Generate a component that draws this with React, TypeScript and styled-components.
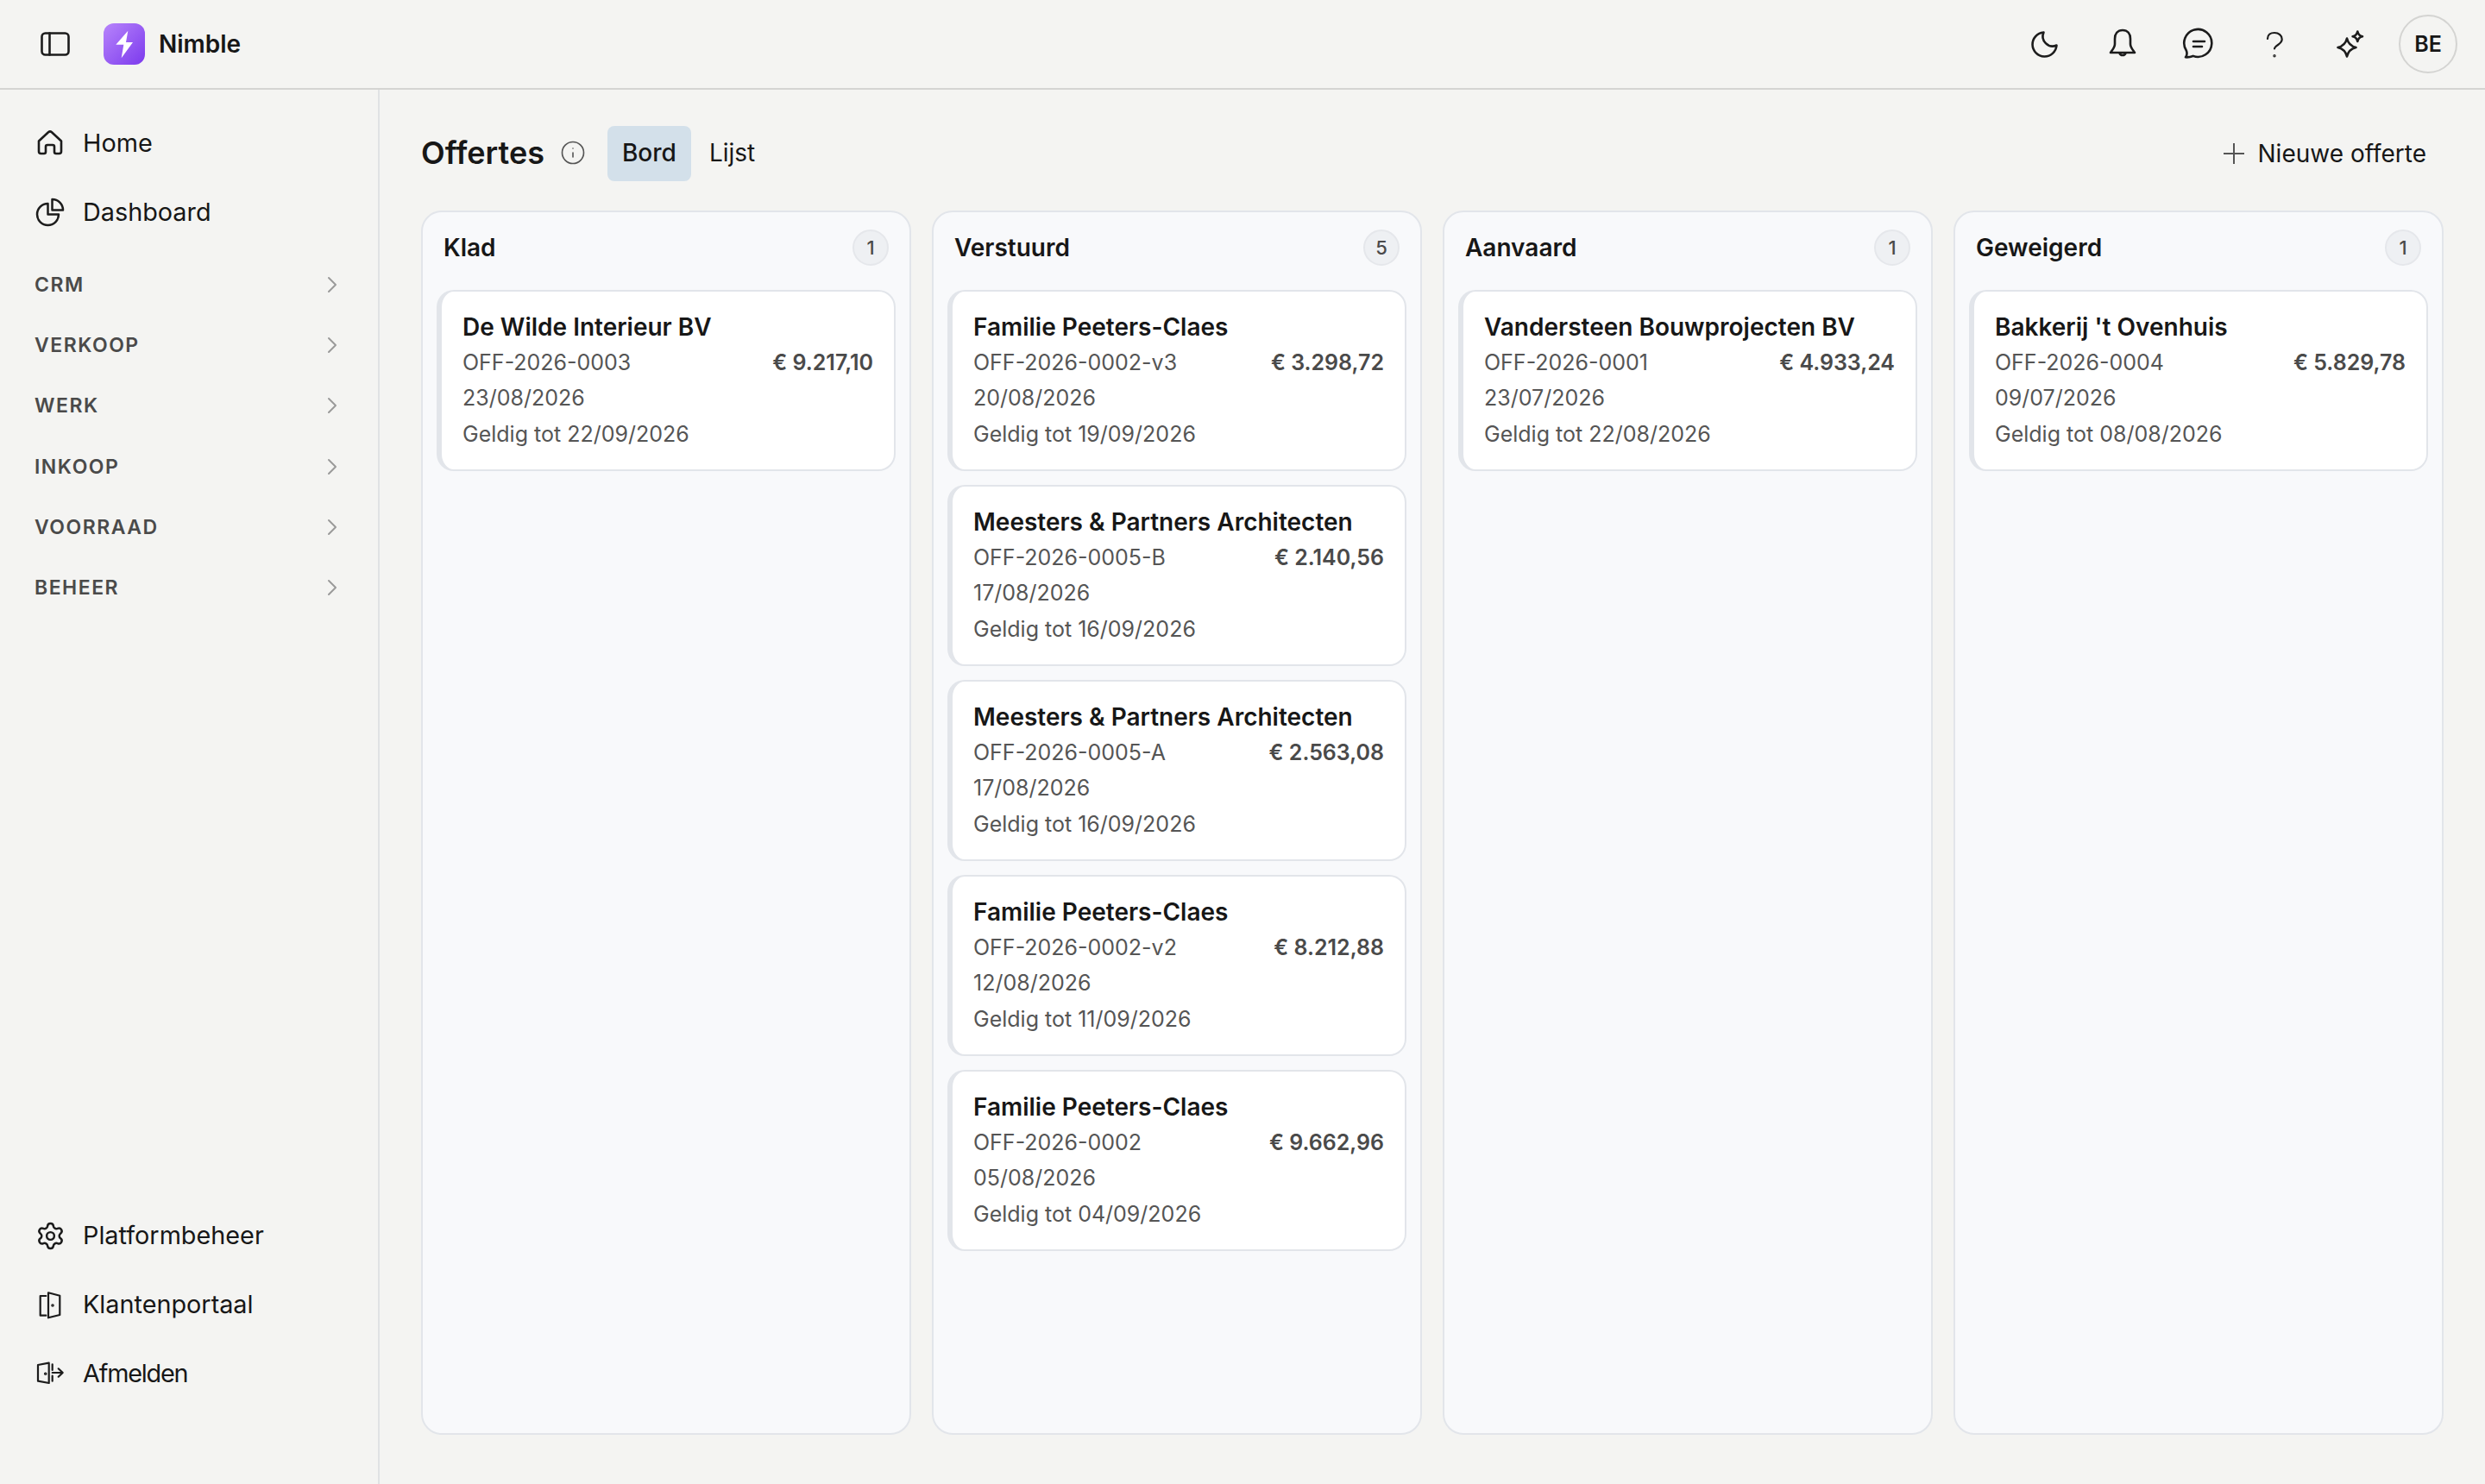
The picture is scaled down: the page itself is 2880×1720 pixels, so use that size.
import React from "react";
import styled, { createGlobalStyle } from "styled-components";
import { ChevronRight, Info, Settings } from "lucide-react";

type Offer = {
  name: string;
  code: string;
  amount: string;
  date: string;
  validUntil: string;
};

type Lane = {
  title: string;
  offers: Array<Offer>;
};

const lanes: Array<Lane> = [
  {
    title: "Klad",
    offers: [
      {
        name: "De Wilde Interieur BV",
        code: "OFF-2026-0003",
        amount: "€ 9.217,10",
        date: "23/08/2026",
        validUntil: "22/09/2026",
      },
    ],
  },
  {
    title: "Verstuurd",
    offers: [
      {
        name: "Familie Peeters-Claes",
        code: "OFF-2026-0002-v3",
        amount: "€ 3.298,72",
        date: "20/08/2026",
        validUntil: "19/09/2026",
      },
      {
        name: "Meesters & Partners Architecten",
        code: "OFF-2026-0005-B",
        amount: "€ 2.140,56",
        date: "17/08/2026",
        validUntil: "16/09/2026",
      },
      {
        name: "Meesters & Partners Architecten",
        code: "OFF-2026-0005-A",
        amount: "€ 2.563,08",
        date: "17/08/2026",
        validUntil: "16/09/2026",
      },
      {
        name: "Familie Peeters-Claes",
        code: "OFF-2026-0002-v2",
        amount: "€ 8.212,88",
        date: "12/08/2026",
        validUntil: "11/09/2026",
      },
      {
        name: "Familie Peeters-Claes",
        code: "OFF-2026-0002",
        amount: "€ 9.662,96",
        date: "05/08/2026",
        validUntil: "04/09/2026",
      },
    ],
  },
  {
    title: "Aanvaard",
    offers: [
      {
        name: "Vandersteen Bouwprojecten BV",
        code: "OFF-2026-0001",
        amount: "€ 4.933,24",
        date: "23/07/2026",
        validUntil: "22/08/2026",
      },
    ],
  },
  {
    title: "Geweigerd",
    offers: [
      {
        name: "Bakkerij 't Ovenhuis",
        code: "OFF-2026-0004",
        amount: "€ 5.829,78",
        date: "09/07/2026",
        validUntil: "08/08/2026",
      },
    ],
  },
];

const groups = ["CRM", "VERKOOP", "WERK", "INKOOP", "VOORRAAD", "BEHEER"];

const GlobalStyle = createGlobalStyle`
  html, body {
    margin: 0;
    background: #f4f4f2;
  }

  body {
    font-family: Inter, "Liberation Sans", sans-serif;
    color: #171717;
  }
`;

const StyledRoot = styled.div`
  display: flex;
  flex-direction: column;
  height: 1720px;
  overflow: hidden;
`;

const StyledTopbar = styled.header`
  display: flex;
  align-items: center;
  justify-content: space-between;
  box-sizing: border-box;
  height: 104px;
  padding: 0 32px 0 44px;
  border-bottom: 2px solid #d4d4d2;
`;

const StyledBrand = styled.div`
  display: flex;
  align-items: center;
`;

const StyledToggle = styled.span`
  display: flex;
  margin-right: 36px;
`;

const StyledLogo = styled.span`
  display: flex;
  width: 48px;
  height: 48px;
  border-radius: 12px;
  background: linear-gradient(135deg, #b784fb 0%, #7c3aed 100%);
`;

const StyledBrandName = styled.span`
  margin-left: 16px;
  font-size: 28px;
  font-weight: 600;
`;

const StyledActions = styled.div`
  display: flex;
  align-items: center;
  gap: 16px;
`;

const StyledAction = styled.span`
  display: flex;
  justify-content: center;
  width: 72px;
`;

const StyledAvatar = styled.span`
  display: flex;
  align-items: center;
  justify-content: center;
  box-sizing: border-box;
  width: 68px;
  height: 68px;
  margin-left: 4px;
  border: 2px solid #d4d4d2;
  border-radius: 50%;
  font-size: 25px;
  font-weight: 600;
`;

const StyledBody = styled.div`
  display: flex;
  flex: 1;
  min-height: 0;
`;

const StyledSidebar = styled.aside`
  display: flex;
  flex-direction: column;
  box-sizing: border-box;
  width: 440px;
  padding: 22px 0 88px;
  border-right: 2px solid #e0e2e4;
`;

const StyledNavItem = styled.div<{ $tight?: boolean }>`
  display: flex;
  align-items: center;
  gap: 18px;
  height: 80px;
  padding-left: 38px;
  font-size: 28.8px;
  line-height: 40px;
  letter-spacing: ${(p) => (p.$tight ? "-1.2px" : "normal")};
`;

const StyledNavIcon = styled.span`
  display: flex;
  align-items: center;
  justify-content: center;
  width: 40px;
  height: 40px;
`;

const StyledGroups = styled.div`
  margin-top: 9px;
`;

const StyledGroup = styled.div`
  display: flex;
  align-items: center;
  justify-content: space-between;
  height: 70.2px;
  padding: 0 37px 0 40px;
  font-size: 23px;
  font-weight: 600;
  letter-spacing: 1.5px;
  color: #4a4a4a;

  svg {
    color: #9a9a9a;
  }
`;

const StyledBottomNav = styled.div`
  margin-top: auto;
`;

const StyledMain = styled.main`
  display: flex;
  flex: 1;
  flex-direction: column;
  min-width: 0;
  padding: 42px 48px 57px;
`;

const StyledTitleRow = styled.div`
  display: flex;
  align-items: center;
  gap: 4px;
  height: 64px;
  margin-bottom: 34px;
`;

const StyledTitle = styled.h1`
  margin: 0 0 2px;
  font-size: 36px;
  font-weight: 600;
`;

const StyledInfo = styled.span`
  display: flex;
  margin: 0 21px 2px 14px;
  color: #555;
`;

const StyledTab = styled.span<{ $active?: boolean }>`
  display: flex;
  align-items: center;
  box-sizing: border-box;
  height: 64px;
  padding: 0 17px 2px;
  border-radius: 8px;
  font-size: 28px;
  font-weight: ${(p) => (p.$active ? 500 : 400)};
  background: ${(p) => (p.$active ? "#d3e0ea" : "transparent")};
`;

const StyledNewButton = styled.span`
  display: flex;
  align-items: center;
  gap: 15px;
  margin-left: auto;
  padding-right: 20px;
  font-size: 28px;
`;

const StyledBoard = styled.div`
  display: grid;
  flex: 1;
  grid-template-columns: repeat(4, 1fr);
  gap: 24px;
  min-height: 0;
`;

const StyledLane = styled.section`
  box-sizing: border-box;
  padding: 20px 16px;
  border: 2px solid #e2e5ea;
  border-radius: 24px;
  background: #f8f9fb;
`;

const StyledLaneHeader = styled.div`
  display: flex;
  align-items: center;
  justify-content: space-between;
  height: 42px;
  margin-bottom: 28px;
  padding: 0 8px;
`;

const StyledLaneTitle = styled.span`
  font-size: 28px;
  font-weight: 600;
`;

const StyledCount = styled.span`
  display: flex;
  align-items: center;
  justify-content: center;
  box-sizing: border-box;
  width: 42px;
  height: 42px;
  border: 2px solid #e5e7eb;
  border-radius: 50%;
  background: #eef0f3;
  font-size: 22px;
  font-weight: 500;
  color: #4a4a4a;
`;

const StyledCards = styled.div`
  display: flex;
  flex-direction: column;
  gap: 16px;
`;

const StyledCard = styled.article`
  box-sizing: border-box;
  height: 210px;
  padding: 21px 24px 19px;
  border: 2px solid #e2e5ea;
  border-left-width: 6px;
  border-radius: 20px;
  background: #fff;
`;

const StyledCardName = styled.div`
  font-size: 28px;
  font-weight: 600;
  line-height: 41px;
`;

const StyledMetaRow = styled.div`
  display: flex;
  justify-content: space-between;
  font-size: 25px;
  line-height: 41.4px;
  color: #555;
`;

const StyledAmount = styled.span`
  font-weight: 600;
  color: #4a4a4a;
`;

const StyledLine = styled.svg.attrs<{ viewBox?: string; strokeWidth?: number }>(
  (p) => ({
    width: 40,
    height: 40,
    viewBox: p.viewBox || "0 0 40 40",
    fill: "none",
    stroke: "#1c1c1c",
    strokeWidth: p.strokeWidth || 2.6,
    strokeLinecap: "round",
    strokeLinejoin: "round",
  })
)`
  display: block;
  flex: none;
`;

const PanelIcon = () => (
  <StyledLine>
    <rect x="4.5" y="7.5" width="31" height="25" rx="4" />
    <path d="M13.5 7.5v25" />
  </StyledLine>
);

const BoltIcon = () => (
  <svg width="48" height="48" viewBox="0 0 48 48" fill="#fff">
    <path d="M28.3 8.7 14.3 24.7h9l-2.6 15.6L34 22h-8z" />
  </svg>
);

const MoonIcon = () => (
  <StyledLine>
    <path d="M16.5 6.500A14 14 0 1 0 31.500 21.500 11.400 11.400 0 0 1 16.500 6.500Z" />
  </StyledLine>
);

const BellIcon = () => (
  <StyledLine>
    <path d="M20 4C14 4 11 8.500 11 14v6c0 4-3 7-5 10h28c-2-3-5-6-5-10v-6c0-5.500-3-10-9-10Z" />
    <path d="M16.500 30.500a3.700 3.700 0 0 0 7 0" />
  </StyledLine>
);

const ChatIcon = () => (
  <StyledLine>
    <path d="M13.700 33.900A16 16 0 1 0 5.800 27.500C6.800 30 7.500 32 5 35.300C8 35.500 11 35 13.700 33.900Z" />
    <path d="M14 17h13M14 23h10" />
  </StyledLine>
);

const QuestionIcon = () => (
  <StyledLine strokeWidth={2.2}>
    <path d="M12 14c0-5 3.500-7 8-7 5 0 8.700 3 8.700 7.500 0 4.500-4.700 6-7.200 8.500-1 1-1.500 2-1.500 2.500" />
    <circle cx="20" cy="33.700" r="0.6" />
  </StyledLine>
);

const SparkleIcon = () => (
  <StyledLine>
    <path d="M16 13.500Q18 22 26.500 24 18 26 16 34.500 14 26 5.500 24 14 22 16 13.500Z" />
    <path d="M28.300 5.500Q29.300 10.300 34 11.300 29.300 12.300 28.300 17 27.300 12.300 22.600 11.300 27.300 10.300 28.300 5.500Z" />
  </StyledLine>
);

const HomeIcon = () => (
  <StyledLine>
    <path d="M7 17.500 18 7.200Q20 5.500 22 7.200L33 17.500V29.500Q33 32 30.500 32H27Q25 32 25 30V24Q25 22 23 22H17Q15 22 15 24V30Q15 32 13 32H9.500Q7 32 7 29.500Z" />
  </StyledLine>
);

const PieIcon = () => (
  <StyledLine viewBox="0 0 24 24" strokeWidth={1.5}>
    <path d="M10.500 6a7.500 7.500 0 1 0 7.500 7.500h-7.500V6Z" />
    <path d="M13.500 10.500H21A7.500 7.500 0 0 0 13.500 3v7.500Z" />
  </StyledLine>
);

const PortalIcon = () => (
  <StyledLine strokeWidth={2.2}>
    <path d="M15.300 10H8.700v22.700h6.600" />
    <path d="M18 6.300 31.300 9.700V32L18 35.300Z" />
    <circle cx="23" cy="21" r="0.7" />
  </StyledLine>
);

const LogoutIcon = () => (
  <StyledLine strokeWidth={2.2}>
    <path d="M18.700 7.700 6 10v18.700l12.700 2.300Z" />
    <circle cx="14.700" cy="20.300" r="0.7" />
    <path d="M22.700 9.300V16M22.700 22.700v6" />
    <path d="M22.700 19H34.700M29.700 14.300 34.700 19 29.700 23.700" />
  </StyledLine>
);

const PlusIcon = () => (
  <svg width="26" height="26" viewBox="0 0 26 26" stroke="#555" strokeWidth="2">
    <path d="M13 1v24M1 13h24" />
  </svg>
);

const topActions = [MoonIcon, BellIcon, ChatIcon, QuestionIcon, SparkleIcon];

const NavRow: React.FC<{
  icon: React.ReactNode;
  label: string;
  tight?: boolean;
}> = ({ icon, label, tight }) => (
  <StyledNavItem $tight={tight}>
    <StyledNavIcon>{icon}</StyledNavIcon>
    {label}
  </StyledNavItem>
);

const OfferCard: React.FC<{ offer: Offer }> = ({ offer }) => (
  <StyledCard>
    <StyledCardName>{offer.name}</StyledCardName>
    <StyledMetaRow>
      <span>{offer.code}</span>
      <StyledAmount>{offer.amount}</StyledAmount>
    </StyledMetaRow>
    <StyledMetaRow>{offer.date}</StyledMetaRow>
    <StyledMetaRow>Geldig tot {offer.validUntil}</StyledMetaRow>
  </StyledCard>
);

export default function App() {
  return (
    <StyledRoot>
      <GlobalStyle />
      <StyledTopbar>
        <StyledBrand>
          <StyledToggle>
            <PanelIcon />
          </StyledToggle>
          <StyledLogo>
            <BoltIcon />
          </StyledLogo>
          <StyledBrandName>Nimble</StyledBrandName>
        </StyledBrand>
        <StyledActions>
          {topActions.map((Icon, i) => (
            <StyledAction key={i}>
              <Icon />
            </StyledAction>
          ))}
          <StyledAvatar>BE</StyledAvatar>
        </StyledActions>
      </StyledTopbar>

      <StyledBody>
        <StyledSidebar>
          <NavRow icon={<HomeIcon />} label="Home" />
          <NavRow icon={<PieIcon />} label="Dashboard" />
          <StyledGroups>
            {groups.map((g) => (
              <StyledGroup key={g}>
                {g}
                <ChevronRight size={32} strokeWidth={1.5} />
              </StyledGroup>
            ))}
          </StyledGroups>
          <StyledBottomNav>
            <NavRow
              icon={<Settings size={35} strokeWidth={1.7} color="#1c1c1c" />}
              label="Platformbeheer"
            />
            <NavRow icon={<PortalIcon />} label="Klantenportaal" />
            <NavRow icon={<LogoutIcon />} label="Afmelden" tight />
          </StyledBottomNav>
        </StyledSidebar>

        <StyledMain>
          <StyledTitleRow>
            <StyledTitle>Offertes</StyledTitle>
            <StyledInfo>
              <Info size={30} strokeWidth={1.3} />
            </StyledInfo>
            <StyledTab $active>Bord</StyledTab>
            <StyledTab>Lijst</StyledTab>
            <StyledNewButton>
              <PlusIcon />
              Nieuwe offerte
            </StyledNewButton>
          </StyledTitleRow>

          <StyledBoard>
            {lanes.map((lane) => (
              <StyledLane key={lane.title}>
                <StyledLaneHeader>
                  <StyledLaneTitle>{lane.title}</StyledLaneTitle>
                  <StyledCount>{lane.offers.length}</StyledCount>
                </StyledLaneHeader>
                <StyledCards>
                  {lane.offers.map((o) => (
                    <OfferCard key={o.code} offer={o} />
                  ))}
                </StyledCards>
              </StyledLane>
            ))}
          </StyledBoard>
        </StyledMain>
      </StyledBody>
    </StyledRoot>
  );
}
